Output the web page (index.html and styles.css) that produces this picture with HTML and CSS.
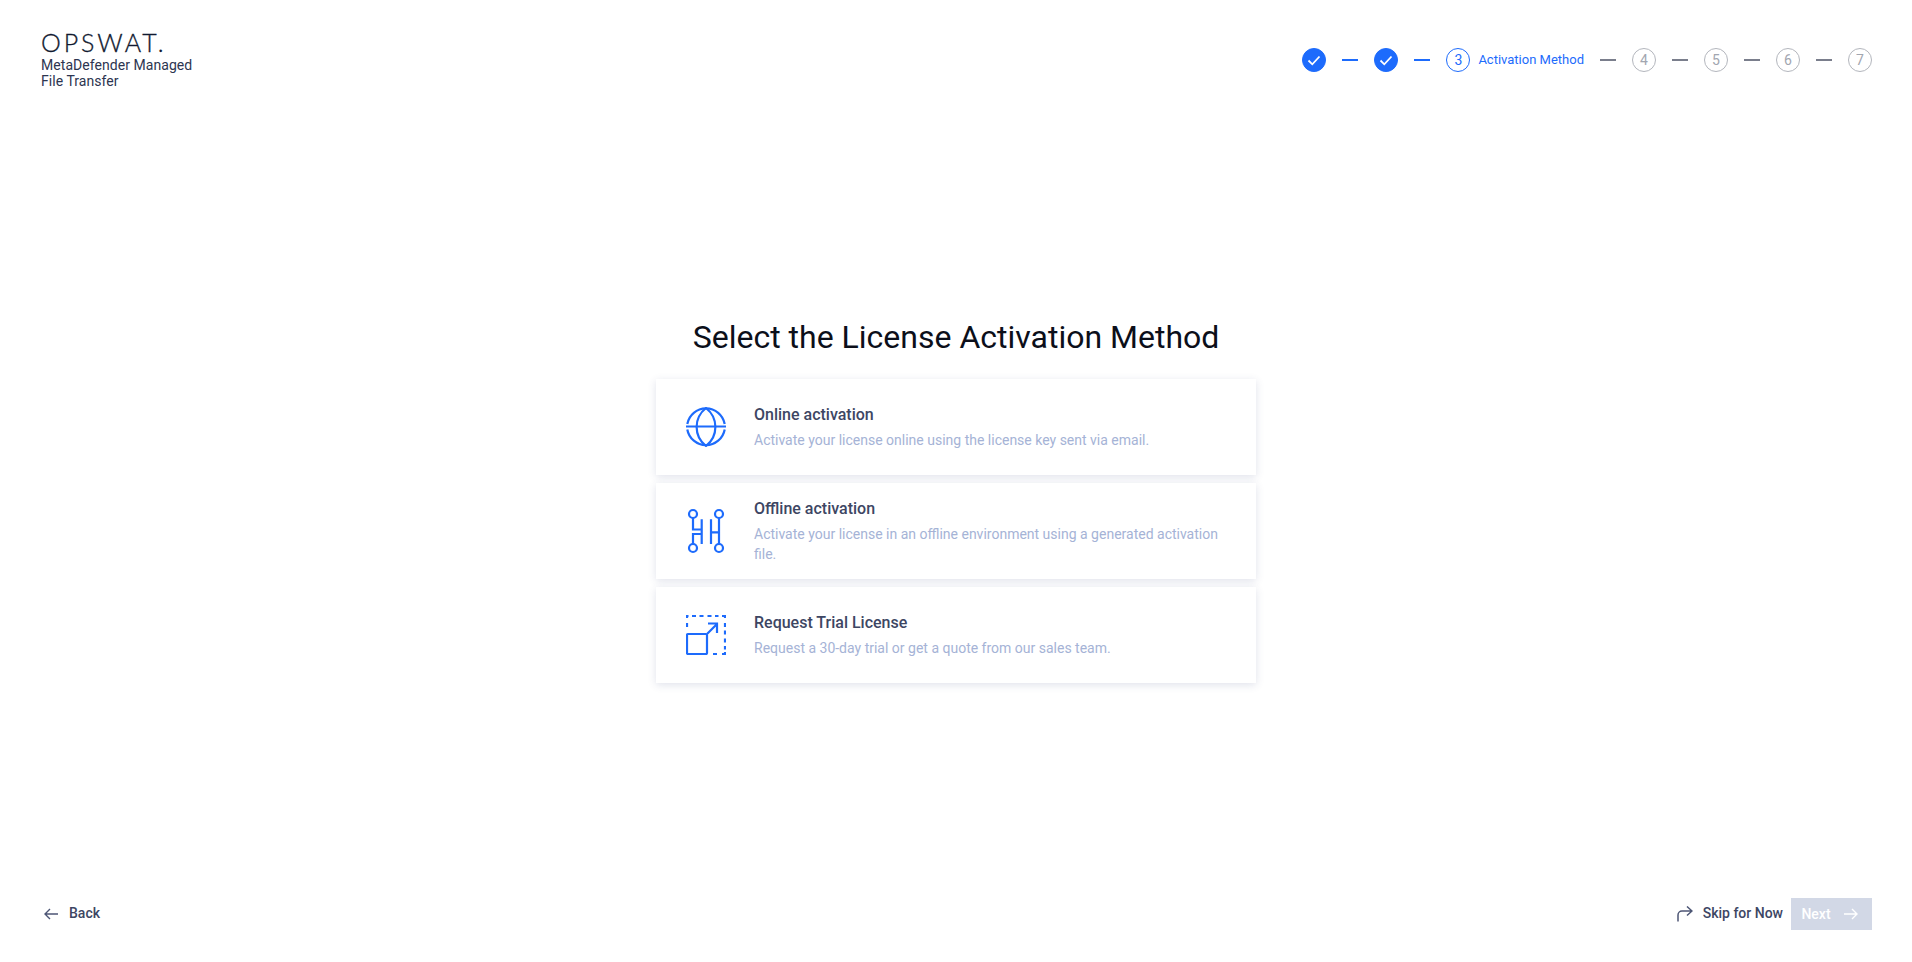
FILE: index.html
```html
<!DOCTYPE html>
<html lang="en">
<head>
<meta charset="utf-8">
<title>MetaDefender Managed File Transfer</title>
<link rel="stylesheet" href="styles.css">
</head>
<body>
<div class="page">
  <header class="header">
    <div class="brand">
      <div class="logo">OPSWAT.</div>
      <div class="product">MetaDefender Managed<br>File Transfer</div>
    </div>
    <nav class="stepper">
      <span class="step done"><svg viewBox="0 0 14 14" width="14" height="14"><path d="M1.5 7.5l3.8 3.8L12.5 3.5" fill="none" stroke="#fff" stroke-width="1.8"/></svg></span>
      <i class="dash on"></i>
      <span class="step done"><svg viewBox="0 0 14 14" width="14" height="14"><path d="M1.5 7.5l3.8 3.8L12.5 3.5" fill="none" stroke="#fff" stroke-width="1.8"/></svg></span>
      <i class="dash on"></i>
      <div class="current"><span class="step active">3</span><span class="step-label">Activation Method</span></div>
      <i class="dash"></i>
      <span class="step">4</span>
      <i class="dash"></i>
      <span class="step">5</span>
      <i class="dash"></i>
      <span class="step">6</span>
      <i class="dash"></i>
      <span class="step">7</span>
    </nav>
  </header>

  <main class="main">
    <h1 class="title">Select the License Activation Method</h1>
    <div class="cards">
      <article class="card">
        <div class="card-icon">
          <svg viewBox="0 0 40 40" width="40" height="40" fill="none" stroke="#1d6bfc" stroke-width="2.2">
            <path d="M1.3 17A19 19 0 0 1 38.7 17"/>
            <path d="M1.3 22.5A19 19 0 0 0 38.7 22.5"/>
            <path d="M20 1C7.5 11 7.5 29 20 39C32.5 29 32.5 11 20 1Z"/>
            <path d="M0 19.5h40"/>
          </svg>
        </div>
        <div class="card-text">
          <h2 class="card-title">Online activation</h2>
          <p class="card-desc">Activate your license online using the license key sent via email.</p>
        </div>
      </article>
      <article class="card">
        <div class="card-icon">
          <svg class="overflowing" viewBox="0 0 40 40" width="40" height="40" fill="none" stroke="#1d6bfc" stroke-width="2.2">
            <circle cx="7" cy="3" r="4"/>
            <circle cx="33" cy="3" r="4"/>
            <circle cx="7" cy="37" r="4"/>
            <circle cx="33" cy="37" r="4"/>
            <path d="M7 7V18.5H15.7M15.7 8.3V33M7 33V23H15.7"/>
            <path d="M25 8.3V33M33 7V33M25 21.3H33"/>
          </svg>
        </div>
        <div class="card-text">
          <h2 class="card-title">Offline activation</h2>
          <p class="card-desc">Activate your license in an offline environment using a generated activation file.</p>
        </div>
      </article>
      <article class="card">
        <div class="card-icon">
          <svg viewBox="0 0 40 40" width="40" height="40" fill="none" stroke="#1d6bfc" stroke-width="2.2">
            <path d="M1 3V1H2.5M6 1h4M13.5 1h4M21.5 1h4M29 1h3.5M36 1h3v2M39 8v4M39 15.5v4M39 23.5v4M39 31v3.5M39 37v2h-3M31 39h-4M1 8v4"/>
            <rect x="1" y="19" width="20" height="20" rx="1"/>
            <path d="M21 19L31 9M22 8.5H31V18"/>
          </svg>
        </div>
        <div class="card-text">
          <h2 class="card-title">Request Trial License</h2>
          <p class="card-desc">Request a 30-day trial or get a quote from our sales team.</p>
        </div>
      </article>
    </div>
  </main>

  <footer class="footer">
    <a class="link back">
      <svg viewBox="0 0 16 16" width="16" height="16" fill="none" stroke="#4d5675" stroke-width="1.4"><path d="M15 8H2M7 3L2 8l5 5"/></svg>
      <span>Back</span>
    </a>
    <div class="actions">
      <a class="link skip">
        <svg viewBox="0 0 16 16" width="16" height="16" fill="none" stroke="#4d5675" stroke-width="1.5"><path d="M1 15.5V9a4 4 0 0 1 4-4h10M10 0.5L15 5l-5 4.5"/></svg>
        <span>Skip for Now</span>
      </a>
      <button class="next" type="button">
        <span>Next</span>
        <svg viewBox="0 0 14 14" width="14" height="14" fill="none" stroke="#fff" stroke-width="1.4"><path d="M0 7h13M8 2l5 5-5 5"/></svg>
      </button>
    </div>
  </footer>
</div>
</body>
</html>
```
FILE: styles.css
```css
* { box-sizing: border-box; }
html, body { margin: 0; padding: 0; height: 100%; }
body { background: #fff; font-family: Roboto, "Liberation Sans", sans-serif; color: #3d4663; overflow: hidden; }

.page { height: 962px; display: flex; flex-direction: column; }

.header { display: flex; justify-content: space-between; align-items: flex-start; padding: 30px 40px 0 41px; height: 298px; }
.brand { width: 170px; }
.logo { font-family: Lato, sans-serif; font-weight: 300; font-size: 25px; line-height: 24px; height: 25px; letter-spacing: 2.9px; color: #111a30; -webkit-text-stroke: 0.3px #111a30; white-space: nowrap; }
.product { font-size: 14px; line-height: 16px; letter-spacing: 0.05px; color: #2d3550; margin-top: 2px; }

.stepper { display: flex; align-items: center; gap: 16px; height: 24px; margin-top: 18px; }
.step { width: 24px; height: 24px; border-radius: 50%; border: 1px solid #b3b6bd; color: #a2a6b0; font-size: 14px; line-height: 22px; display: flex; align-items: center; justify-content: center; flex: none; }
.step.done { background: #1d6bfc; border-color: #1d6bfc; }
.step.active { border-color: #1d6bfc; color: #1d6bfc; }
.current { display: flex; align-items: center; gap: 8px; }
.step-label { font-size: 13px; color: #1d6bfc; white-space: nowrap; margin-bottom: 1px; }
.dash { display: block; width: 16px; height: 2px; background: #7a7e8c; flex: none; }
.dash.on { background: #1d6bfc; }

.main { flex: 1; display: flex; flex-direction: column; align-items: center; }
.title { margin: 0; font-size: 32px; line-height: 78px; height: 80px; font-weight: 400; color: #0c0f1a; text-align: center; }
.cards { width: 600px; display: flex; flex-direction: column; gap: 8px; margin-top: 1px; }
.card { height: 96px; display: flex; align-items: center; padding: 0 24px 0 30px; background: #fff; box-shadow: 0 2px 8px rgba(60, 75, 130, 0.16); }
.card-icon { width: 40px; height: 40px; flex: none; margin-right: 28px; }
.card-icon svg { display: block; }
.card-icon .overflowing { overflow: visible; }
.card-text { flex: 1; min-width: 0; padding-bottom: 1px; }
.card-title { margin: 0; font-size: 16px; line-height: 24px; font-weight: 500; color: #3d4663; }
.card-desc { margin: 3px 0 0; font-size: 14px; line-height: 20px; color: #a5b3d6; }

.footer { display: flex; justify-content: space-between; align-items: center; padding: 0 40px 32px 43px; height: 64px; }
.link { display: flex; align-items: center; font-size: 14px; font-weight: 500; color: #3d4663; }
.link span { margin-bottom: 2px; }
.back { gap: 10px; }
.skip { gap: 10px; }
.actions { display: flex; align-items: center; gap: 8px; }
.next { width: 81px; height: 32px; border: 0; background: #d2d8e6; color: #fff; font: 500 14px Roboto, sans-serif; display: flex; align-items: center; justify-content: center; gap: 13px; padding: 0 4px 0 0; }
```
